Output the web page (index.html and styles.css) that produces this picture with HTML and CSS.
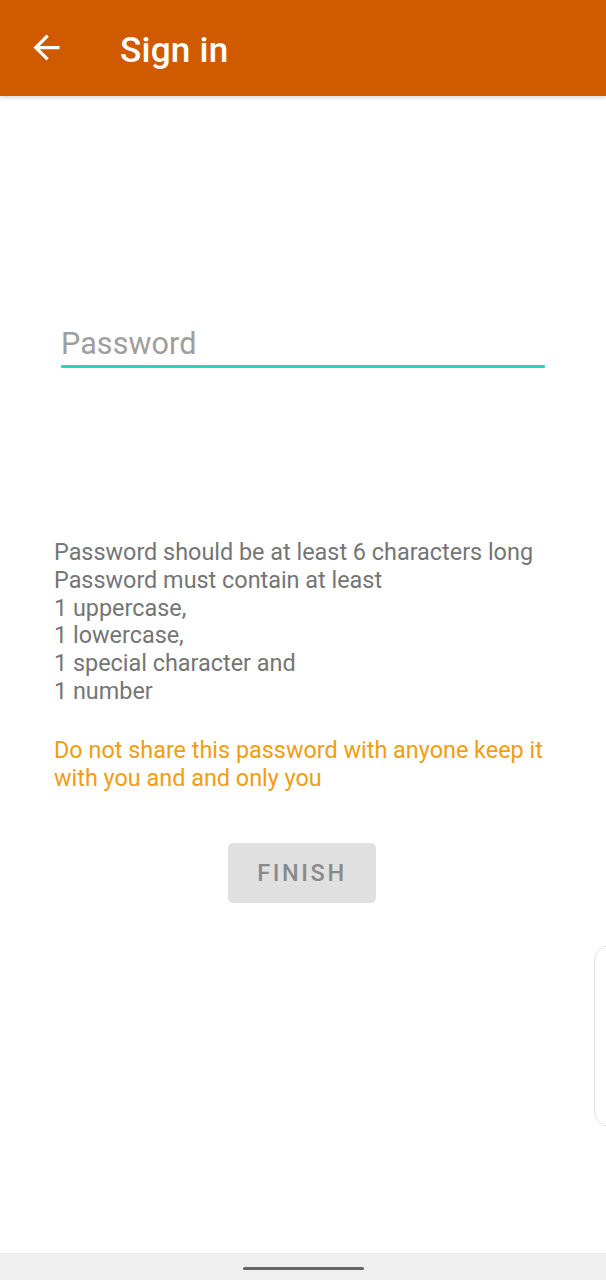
FILE: index.html
```html
<!DOCTYPE html>
<html>
<head>
<meta charset="utf-8">
<link rel="stylesheet" href="styles.css">
</head>
<body>
<div class="screen">
  <header class="appbar">
    <svg class="back" width="39" height="39" viewBox="0 0 24 24"><path d="M20 11H7.83l5.59-5.59L12 4l-8 8 8 8 1.41-1.41L7.83 13H20v-2z" fill="#fff"/></svg>
    <h1 class="title">Sign in</h1>
  </header>
  <main class="content">
    <div class="field">
      <div class="placeholder">Password</div>
      <div class="underline"></div>
    </div>
    <div class="rules">
      <div>Password should be at least 6 characters long</div>
      <div>Password must contain at least</div>
      <div>1 uppercase,</div>
      <div>1 lowercase,</div>
      <div>1 special character and</div>
      <div>1 number</div>
    </div>
    <p class="warning">Do not share this password with anyone keep it with you and and only you</p>
    <div class="actions"><button class="finish">FINISH</button></div>
  </main>
  <div class="edge-tab"></div>
  <footer class="navbar"><span class="pill"></span></footer>
</div>
</body>
</html>
```
FILE: styles.css
```css
html, body { margin: 0; padding: 0; background: #fff; }
body { font-family: Roboto, "Noto Sans", sans-serif; }
.screen { position: relative; width: 606px; height: 1280px; display: flex; flex-direction: column; overflow: hidden; }
.appbar { height: 96px; background: #d05a00; display: flex; align-items: center; box-shadow: 0 2px 4px rgba(0,0,0,0.15); flex-shrink: 0; position: relative; z-index: 1; }
.back { margin-left: 27px; margin-top: -2px; }
.title { margin: 3px 0 0 54px; color: #fff; font-size: 35.2px; font-weight: 500; letter-spacing: 0.2px; }
.content { flex: 1; padding: 0 50px 0 54px; }
.field { margin: 228px 11px 0 7px; }
.placeholder { font-size: 30.5px; color: #9e9e9e; line-height: 40px; letter-spacing: 0.1px; margin-top: 3px; }
.underline { height: 3px; background: #2bd5bd; margin-top: 1px; border-radius: 1px; }
.rules { margin-top: 171px; font-size: 23.4px; line-height: 27.8px; color: #757575; }
.warning { margin: 30px 0 0 0; font-size: 23.4px; line-height: 28px; color: #f39c12; }
.actions { display: flex; justify-content: center; margin-top: 51px; padding-right: 6px; }
.finish { width: 148px; height: 60px; border: none; border-radius: 5px; background: #e0e0e0; color: #8a8a8a; font-family: Roboto, sans-serif; font-size: 23.5px; font-weight: 500; letter-spacing: 2.6px; padding: 0; }
.edge-tab { position: absolute; right: -20px; top: 945px; width: 30px; height: 180px; border: 1px solid #e2e2e2; border-radius: 16px; background: #fff; }
.navbar { height: 26px; background: #efefef; border-top: 1px solid #e6e6e6; display: flex; justify-content: center; align-items: center; flex-shrink: 0; }
.pill { width: 121px; height: 3px; background: #666; border-radius: 2px; margin-top: 3px; }
```
